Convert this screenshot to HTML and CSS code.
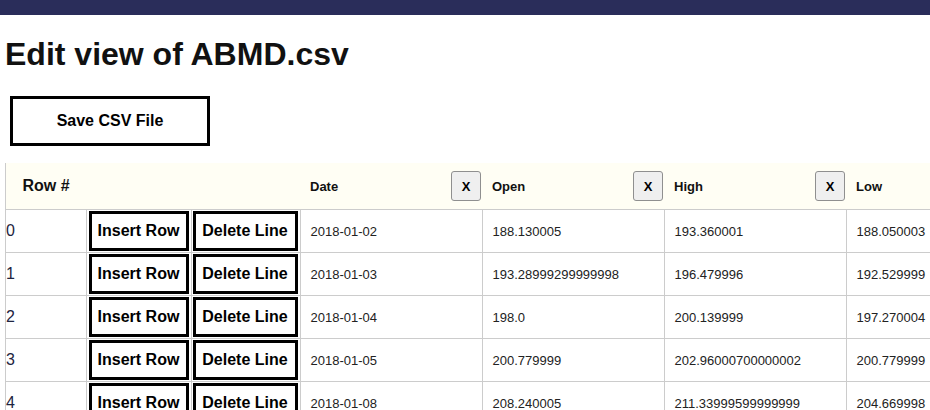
FILE: index.html
```html
<!DOCTYPE html>
<html lang="en">
<head>
<meta charset="utf-8">
<title>Edit view of ABMD.csv</title>
<link rel="stylesheet" href="styles.css">
</head>
<body>
<div class="topbar"></div>
<main class="content">
  <h1 class="title">Edit view of ABMD.csv</h1>
  <button class="save-btn" type="button">Save CSV File</button>
  <table class="csv-table">
    <thead>
      <tr>
        <th class="col-num rownum-head">Row #</th>
        <th class="col-ins"></th>
        <th class="col-del"></th>
        <th class="col-data"><div class="head-cell"><span>Date</span><button class="x-btn" type="button">X</button></div></th>
        <th class="col-data"><div class="head-cell"><span>Open</span><button class="x-btn" type="button">X</button></div></th>
        <th class="col-data"><div class="head-cell"><span>High</span><button class="x-btn" type="button">X</button></div></th>
        <th class="col-data"><div class="head-cell"><span>Low</span><button class="x-btn" type="button">X</button></div></th>
        <th class="col-data"><div class="head-cell"><span>Close</span><button class="x-btn" type="button">X</button></div></th>
        <th class="col-data"><div class="head-cell"><span>Adj Close</span><button class="x-btn" type="button">X</button></div></th>
        <th class="col-data"><div class="head-cell"><span>Volume</span><button class="x-btn" type="button">X</button></div></th>
      </tr>
    </thead>
    <tbody>
      <tr>
        <td class="num">0</td>
        <td class="act"><button class="row-btn" type="button">Insert Row</button></td>
        <td class="act"><button class="row-btn" type="button">Delete Line</button></td>
        <td class="val">2018-01-02</td><td class="val">188.130005</td><td class="val">193.360001</td><td class="val">188.050003</td><td class="val">192.490005</td><td class="val">192.490005</td><td class="val">497200</td>
      </tr>
      <tr>
        <td class="num">1</td>
        <td class="act"><button class="row-btn" type="button">Insert Row</button></td>
        <td class="act"><button class="row-btn" type="button">Delete Line</button></td>
        <td class="val">2018-01-03</td><td class="val">193.28999299999998</td><td class="val">196.479996</td><td class="val">192.529999</td><td class="val">195.820007</td><td class="val">195.820007</td><td class="val">551900</td>
      </tr>
      <tr>
        <td class="num">2</td>
        <td class="act"><button class="row-btn" type="button">Insert Row</button></td>
        <td class="act"><button class="row-btn" type="button">Delete Line</button></td>
        <td class="val">2018-01-04</td><td class="val">198.0</td><td class="val">200.139999</td><td class="val">197.270004</td><td class="val">199.25</td><td class="val">199.25</td><td class="val">555600</td>
      </tr>
      <tr>
        <td class="num">3</td>
        <td class="act"><button class="row-btn" type="button">Insert Row</button></td>
        <td class="act"><button class="row-btn" type="button">Delete Line</button></td>
        <td class="val">2018-01-05</td><td class="val">200.779999</td><td class="val">202.96000700000002</td><td class="val">200.779999</td><td class="val">202.320007</td><td class="val">202.320007</td><td class="val">463300</td>
      </tr>
      <tr>
        <td class="num">4</td>
        <td class="act"><button class="row-btn" type="button">Insert Row</button></td>
        <td class="act"><button class="row-btn" type="button">Delete Line</button></td>
        <td class="val">2018-01-08</td><td class="val">208.240005</td><td class="val">211.33999599999999</td><td class="val">204.669998</td><td class="val">207.800003</td><td class="val">207.800003</td><td class="val">713800</td>
      </tr>
    </tbody>
  </table>
</main>
</body>
</html>
```

FILE: styles.css
```css
html {
  overflow: hidden;
}

body {
  margin: 0;
  font-family: "Liberation Sans", Arial, sans-serif;
  color: #222;
  background: #fff;
}

.topbar {
  height: 15px;
  background: #2a2d5a;
}

.content {
  padding: 0 0 0 5px;
  display: flex;
  flex-direction: column;
  align-items: flex-start;
}

.title {
  margin: 21px 0 23px 0;
  font-size: 32px;
  line-height: 37px;
  font-weight: bold;
  color: #111;
}

.save-btn {
  margin: 0 0 17px 5px;
  width: 200px;
  height: 50px;
  box-sizing: border-box;
  border: 3px solid #000;
  background: #fff;
  color: #000;
  font-family: "Liberation Sans", Arial, sans-serif;
  font-size: 16px;
  font-weight: bold;
  padding: 0;
}

.csv-table {
  border-collapse: collapse;
  border-left: 1px solid #ccc;
  flex-shrink: 0;
  white-space: nowrap;
}

.csv-table th {
  background: #fffef4;
  padding: 8px 1px 8px 10px;
  font-size: 13px;
  font-weight: bold;
  color: #111;
  text-align: left;
  border: none;
  height: 30px;
}

.csv-table th.col-num {
  width: 80px;
  min-width: 80px;
}

.csv-table th.col-ins {
  padding: 8px 2px;
  width: 101px;
  min-width: 101px;
}

.csv-table th.col-del {
  padding: 8px 2px 8px 1px;
  width: 106px;
  min-width: 106px;
}

.csv-table th.col-data {
  width: 171px;
  min-width: 171px;
}

.csv-table th.rownum-head {
  font-size: 16px;
  text-align: center;
  padding: 8px 0;
  border-left: 1px solid #ccc;
}

.head-cell {
  display: flex;
  align-items: center;
  justify-content: space-between;
}

.x-btn {
  width: 30px;
  height: 30px;
  box-sizing: border-box;
  padding: 0;
  border: 1px solid #8f8f8f;
  border-radius: 3px;
  background: #efefef;
  color: #000;
  font-family: "Liberation Sans", Arial, sans-serif;
  font-size: 13px;
  font-weight: bold;
}

.csv-table td {
  border: 1px solid #ccc;
  height: 42px;
  box-sizing: border-box;
  vertical-align: middle;
}

.csv-table td.num {
  padding: 0;
  font-size: 16px;
  color: #1e2440;
}

.csv-table td.act {
  padding: 1px 2px;
}

.csv-table td.act + td.act {
  padding: 1px 2px 1px 1px;
}

.csv-table td.val {
  padding: 0 1px 0 10px;
  font-size: 13px;
  color: #222;
}

.row-btn {
  display: block;
  width: 100%;
  height: 40px;
  box-sizing: border-box;
  border: 3px solid #000;
  background: #fff;
  color: #000;
  padding: 0 4px;
  font-family: "Liberation Sans", Arial, sans-serif;
  font-size: 16px;
  font-weight: bold;
  white-space: nowrap;
}
```
